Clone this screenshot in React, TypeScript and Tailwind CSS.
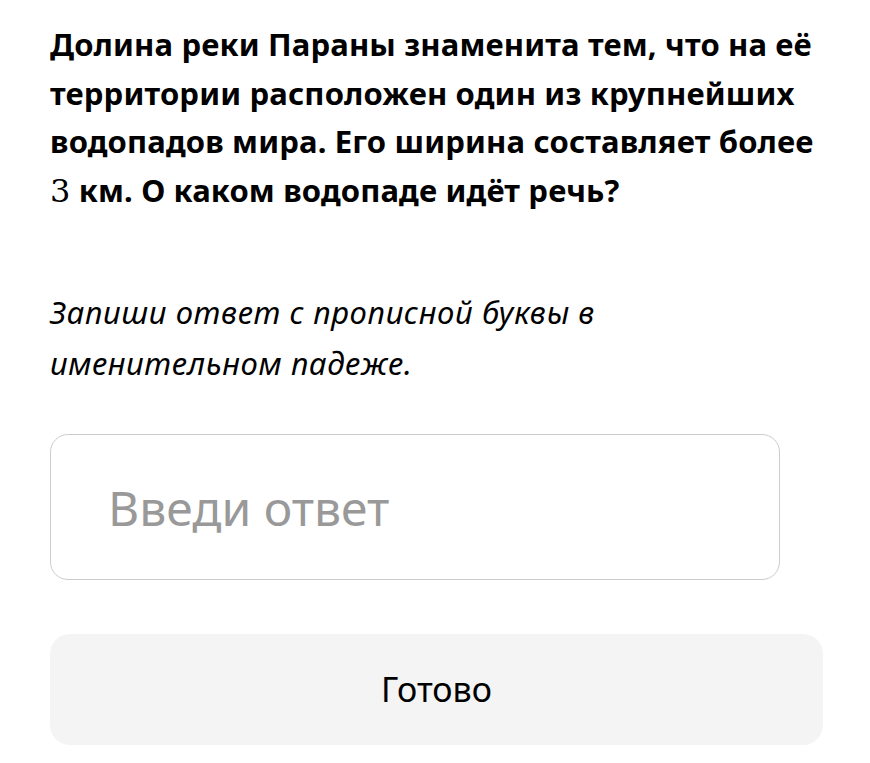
export default function App() {
  return (
    <div className="min-h-screen bg-white font-['Noto_Sans',sans-serif] text-black">
      <div className="pl-[50px] pr-[47px] pt-[20px]">
        <p className="text-[31px] font-bold leading-[48.5px] tracking-[0.15px]">
          Долина реки Параны знаменита тем, что на её территории расположен один из крупнейших водопадов мира. Его
          ширина составляет более <span className="font-['DejaVu_Serif',serif] text-[32px] font-normal">3</span> км. О каком
          водопаде идёт речь?
        </p>
        <p className="mt-[72px] pr-[200px] text-[31px] italic leading-[51px] tracking-[0.6px]">
          Запиши ответ с прописной буквы в именительном падеже.
        </p>
        <div className="mt-[45px] w-[730px]">
          <input
            type="text"
            placeholder="Введи ответ"
            className="h-[146px] w-full rounded-[18px] border border-[#cccccc] pl-[57px] pr-[20px] text-[48px] outline-none placeholder:text-[#999999]"
          />
        </div>
        <button className="mt-[54px] flex h-[111px] w-full items-center justify-center rounded-[20px] bg-[#f4f4f4] text-[34px]">
          Готово
        </button>
      </div>
    </div>
  );
}
